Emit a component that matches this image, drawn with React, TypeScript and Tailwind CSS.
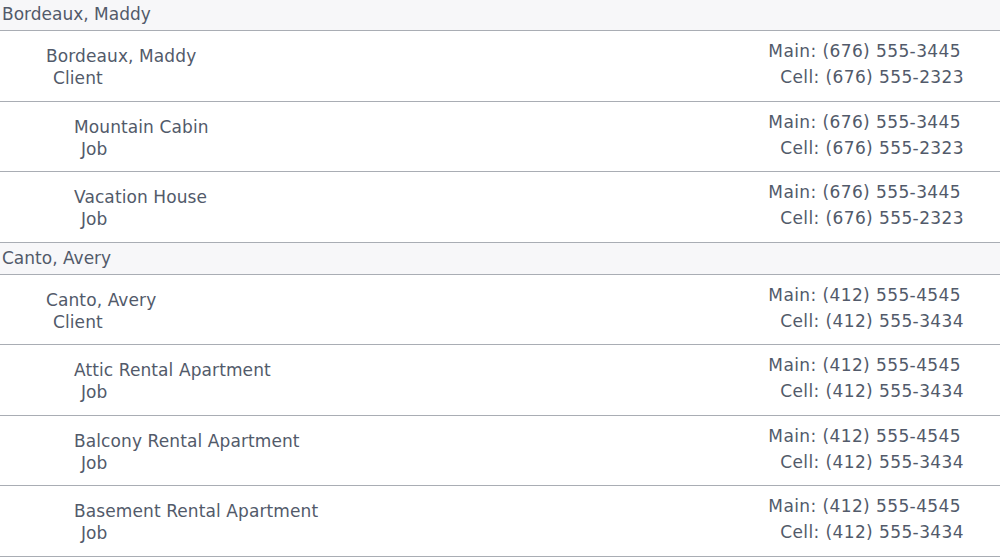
import React from 'react';

type Row = { name: string; role: string; main: string; cell: string; job?: boolean };

const groups: { title: string; rows: Row[] }[] = [
  {
    title: 'Bordeaux, Maddy',
    rows: [
      { name: 'Bordeaux, Maddy', role: 'Client', main: '(676) 555-3445', cell: '(676) 555-2323' },
      { name: 'Mountain Cabin', role: 'Job', main: '(676) 555-3445', cell: '(676) 555-2323', job: true },
      { name: 'Vacation House', role: 'Job', main: '(676) 555-3445', cell: '(676) 555-2323', job: true },
    ],
  },
  {
    title: 'Canto, Avery',
    rows: [
      { name: 'Canto, Avery', role: 'Client', main: '(412) 555-4545', cell: '(412) 555-3434' },
      { name: 'Attic Rental Apartment', role: 'Job', main: '(412) 555-4545', cell: '(412) 555-3434', job: true },
      { name: 'Balcony Rental Apartment', role: 'Job', main: '(412) 555-4545', cell: '(412) 555-3434', job: true },
      { name: 'Basement Rental Apartment', role: 'Job', main: '(412) 555-4545', cell: '(412) 555-3434', job: true },
    ],
  },
];

const App = () => {
  return (
    <div className="w-[1000px] h-[559px] overflow-hidden bg-white text-[#525a6a] text-[17px] font-['DejaVu_Sans',Verdana,sans-serif]">
      <div className="-mt-[1px]">
        {groups.map((g) => (
          <div key={g.title}>
            <div className="h-[32px] bg-[#f7f7f9] border-b border-[#a9adb4] px-[2px] pt-[1px] flex items-center">
              {g.title}
            </div>
            {g.rows.map((r) => (
              <div key={r.name} className="h-[70.5px] border-b border-[#a9adb4] flex justify-between">
                <div className={r.job ? 'pl-[74px] pt-[14px] leading-[22px] tracking-[0.1px]' : 'pl-[46px] pt-[14px] leading-[22px] tracking-[0.1px]'}>
                  <div>{r.name}</div>
                  <div className="pl-[7px]">{r.role}</div>
                </div>
                <div className="pt-[7px] leading-[26px] text-right tracking-[0.4px]">
                  <div className="pr-[39px]">Main: {r.main}</div>
                  <div className="pr-[36px]">Cell: {r.cell}</div>
                </div>
              </div>
            ))}
          </div>
        ))}
      </div>
    </div>
  );
};

export default App;
